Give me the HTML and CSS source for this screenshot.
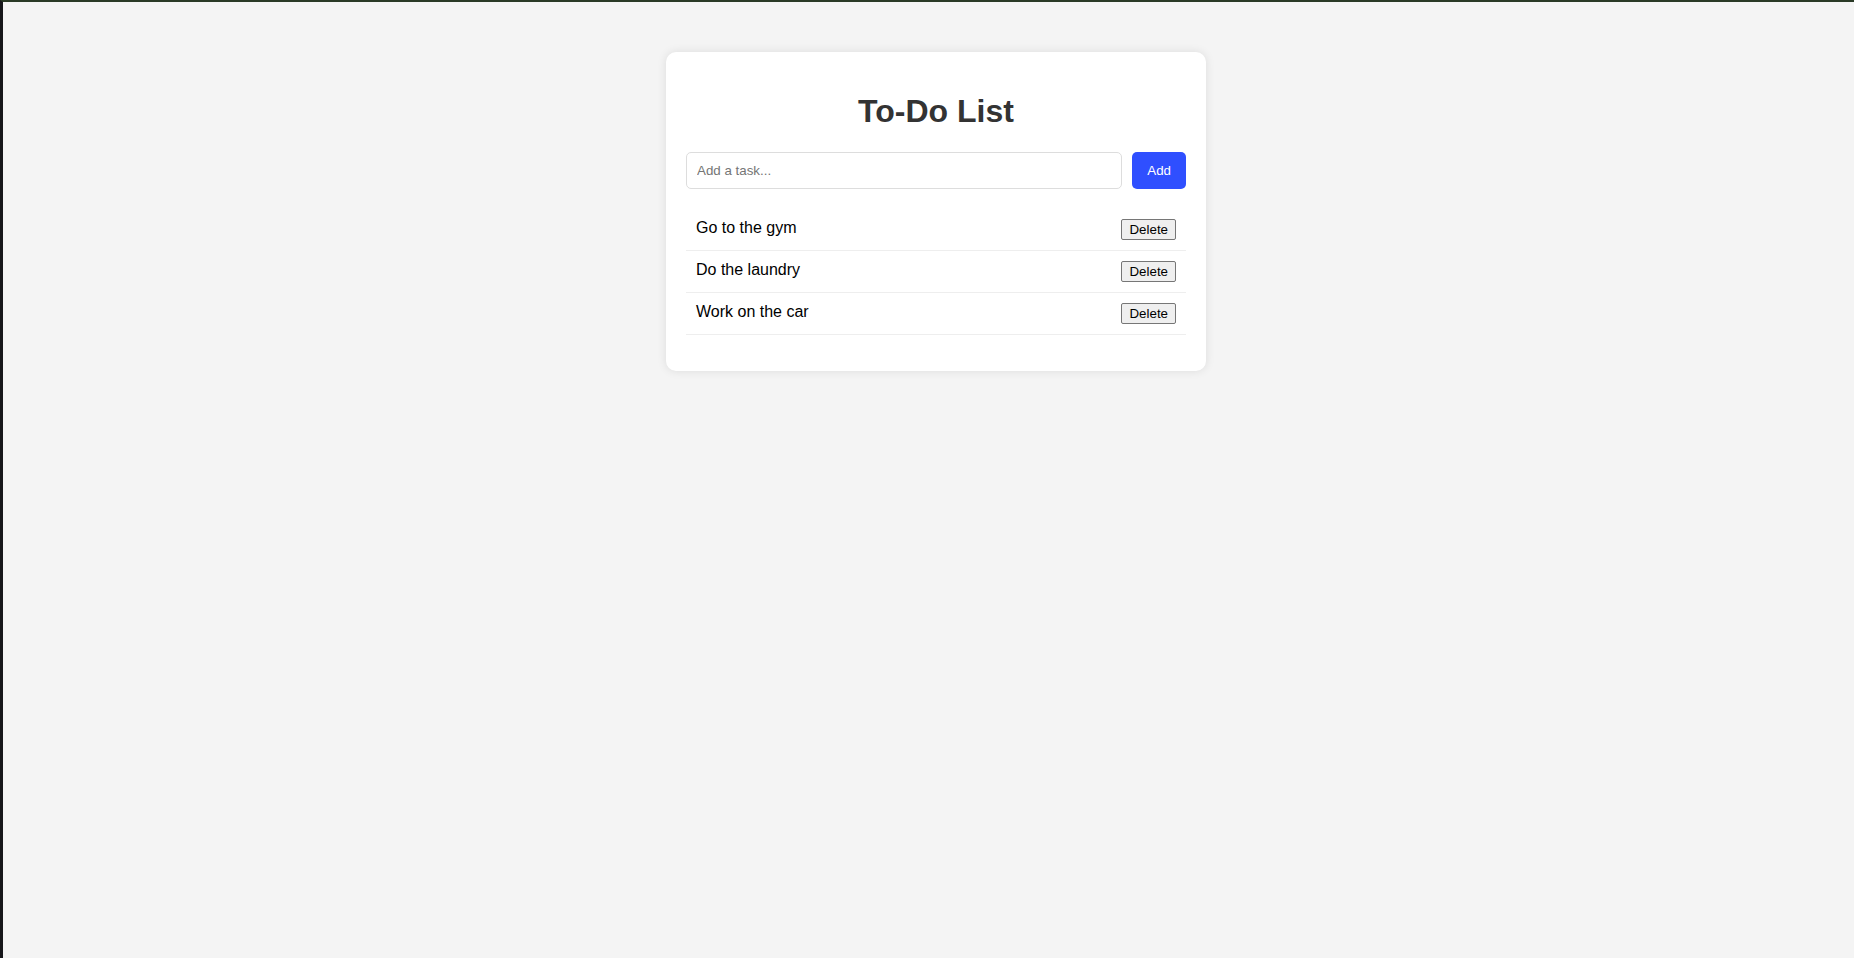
FILE: index.html
```html
<!DOCTYPE html>
<html lang="en">
<head>
<meta charset="utf-8">
<title>To-Do List</title>
<link rel="stylesheet" href="styles.css">
</head>
<body>
<div class="container">
  <h1 class="title">To-Do List</h1>
  <div class="add-row">
    <input class="task-input" type="text" placeholder="Add a task...">
    <button class="add-btn">Add</button>
  </div>
  <ul class="task-list">
    <li class="task">Go to the gym<button class="delete-btn">Delete</button></li>
    <li class="task">Do the laundry<button class="delete-btn">Delete</button></li>
    <li class="task">Work on the car<button class="delete-btn">Delete</button></li>
  </ul>
</div>
</body>
</html>
```
FILE: styles.css
```css
html, body {
  height: 100%;
}
body {
  margin: 0;
  box-sizing: border-box;
  border-top: 2px solid #2a3a26;
  border-left: 3px solid #16161a;
  background: #f4f4f4;
  font-family: "Liberation Sans", Arial, sans-serif;
  padding: 50px 0 0 15px;
}
.container {
  width: 500px;
  margin: 0 auto;
  padding: 20px;
  background: #fff;
  border-radius: 10px;
  box-shadow: 0 0 10px rgba(0, 0, 0, 0.1);
}
.title {
  text-align: center;
  color: #333;
  font-size: 32px;
  margin: 21.44px 0;
}
.add-row {
  display: flex;
  gap: 10px;
  margin-bottom: 20px;
}
.task-input {
  flex: 1;
  padding: 10px;
  border: 1px solid #ddd;
  border-radius: 5px;
  font-family: "Liberation Sans", Arial, sans-serif;
  font-size: 13.33px;
  outline: none;
}
.task-input::placeholder {
  color: #757575;
}
.add-btn {
  padding: 10px 15px;
  border: none;
  border-radius: 5px;
  background: #2f4fff;
  color: #fff;
  font-family: "Liberation Sans", Arial, sans-serif;
  font-size: 13.33px;
}
.task-list {
  list-style: none;
  padding: 0;
  margin: 16px 0;
}
.task {
  display: flex;
  justify-content: space-between;
  padding: 10px;
  border-bottom: 1px solid #eee;
  font-size: 16px;
  color: #000;
}
.delete-btn {
  font-family: "Liberation Sans", Arial, sans-serif;
  font-size: 13.33px;
  background: #efefef;
  border: 1px solid #767676;
  border-radius: 2px;
  padding: 2px 7px;
  color: #000;
}
```
